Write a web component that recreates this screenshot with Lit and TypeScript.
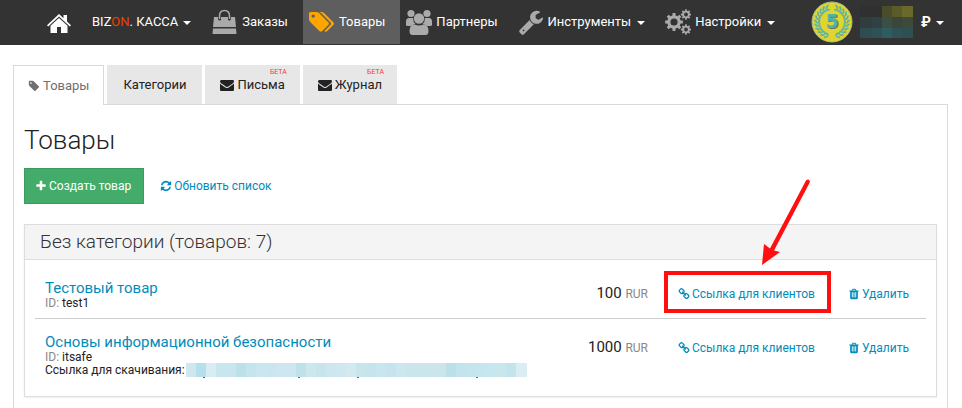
import { LitElement, html, css, svg, nothing } from "lit";
import { customElement } from "lit/decorators.js";

const P = {
  tag: "M576 448q0-53-37.500-90.500t-90.500-37.500-90.500 37.500-37.500 90.500 37.500 90.500 90.500 37.500 90.500-37.500 37.500-90.500zm1067 576q0 53-37 90l-491 492q-39 37-91 37-53 0-90-37l-715-716q-38-37-64.500-101t-26.500-117v-416q0-52 38-90t90-38h416q53 0 117 26.500t102 64.500l715 714q37 39 37 91z",
  tags: "M448 448q0-53-37.500-90.500t-90.500-37.500-90.500 37.500-37.500 90.500 37.500 90.500 90.500 37.500 90.500-37.500 37.500-90.500zm1067 576q0 53-37 90l-491 492q-39 37-91 37-53 0-90-37l-715-716q-38-37-64.500-101t-26.500-117v-416q0-52 38-90t90-38h416q53 0 117 26.500t102 64.500l715 714q37 39 37 91zm384 0q0 53-37 90l-491 492q-39 37-91 37-36 0-59-14t-53-45l470-470q37-37 37-90 0-52-37-91l-715-714q-38-38-102-64.500t-117-26.500h224q53 0 117 26.500t102 64.500l715 714q37 39 37 91z",
  envelope: "M1792 710v794q0 66-47 113t-113 47h-1472q-66 0-113-47t-47-113v-794q44 49 101 87 362 246 497 345 57 42 92.500 65.500t94.500 48 110 24.500h2q51 0 110-24.500t94.500-48 92.500-65.500q170-123 498-345 57-39 100-87zm0-294q0 79-49 151t-122 123q-376 261-468 325-10 7-42.500 30.500t-54 38-52 32.500-57.500 27-50 9h-2q-23 0-50-9t-57.500-27-52-32.500-54-38-42.500-30.500q-91-64-262-182.500t-205-142.500q-62-42-117-115.500t-55-136.500q0-78 41.500-130t118.500-52h1472q65 0 112.500 47t47.500 113z",
  plus: "M1600 736v192q0 40-28 68t-68 28h-416v416q0 40-28 68t-68 28h-192q-40 0-68-28t-28-68v-416h-416q-40 0-68-28t-28-68v-192q0-40 28-68t68-28h416v-416q0-40 28-68t68-28h192q40 0 68 28t28 68v416h416q40 0 68 28t28 68z",
  refresh: "M1639 1056q0 5-1 7-64 268-268 434.500t-478 166.500q-146 0-282.500-55t-243.500-157l-129 129q-19 19-45 19t-45-19-19-45v-448q0-26 19-45t45-19h448q26 0 45 19t19 45-19 45l-137 137q71 66 161 102t187 36q134 0 250-65t186-179q11-17 53-117 8-23 30-23h192q13 0 22.500 9.500t9.500 22.500zm25-800v448q0 26-19 45t-45 19h-448q-26 0-45-19t-19-45 19-45l138-138q-148-137-349-137-134 0-250 65t-186 179q-11 17-53 117-8 23-30 23h-199q-13 0-22.500-9.500t-9.500-22.500v-7q65-268 270-434.500t480-166.500q146 0 284 55.500t245 156.500l130-129q19-19 45-19t45 19 19 45z",
  trash: "M704 1376v-704q0-14-9-23t-23-9h-64q-14 0-23 9t-9 23v704q0 14 9 23t23 9h64q14 0 23-9t9-23zm256 0v-704q0-14-9-23t-23-9h-64q-14 0-23 9t-9 23v704q0 14 9 23t23 9h64q14 0 23-9t9-23zm256 0v-704q0-14-9-23t-23-9h-64q-14 0-23 9t-9 23v704q0 14 9 23t23 9h64q14 0 23-9t9-23zm-544-992h448l-48-117q-7-9-17-11h-317q-10 2-17 11zm928 32v64q0 14-9 23t-23 9h-96v948q0 83-47 143.500t-113 60.500h-832q-66 0-113-58.500t-47-141.500v-952h-96q-14 0-23-9t-9-23v-64q0-14 9-23t23-9h309l70-167q15-37 54-63t79-26h320q40 0 79 26t54 63l70 167h309q14 0 23 9t9 23z",
  chain: "M1520 1216q0-40-28-68l-208-208q-28-28-68-28-42 0-72 32 3 3 19 18.500t21.500 21.500 15 19 13 25.500 3.500 27.500q0 40-28 68t-68 28q-15 0-27.500-3.500t-25.500-13-19-15-21.500-21.500-18.500-19q-33 31-33 73 0 40 28 68l206 207q27 27 68 27 40 0 68-26l147-146q28-28 28-67zm-703-705q0-40-28-68l-206-207q-28-28-68-28-39 0-68 27l-147 146q-28 28-28 67 0 40 28 68l208 208q27 27 68 27 42 0 72-31-3-3-19-18.500t-21.500-21.500-15-19-13-25.500-3.500-27.500q0-40 28-68t68-28q15 0 27.500 3.500t25.500 13 19 15 21.500 21.500 18.500 19q33-31 33-73zm895 705q0 120-85 203l-147 146q-83 83-203 83-121 0-204-85l-206-207q-83-83-83-203 0-123 88-209l-88-88q-86 88-208 88-120 0-204-84l-208-208q-84-84-84-204t85-203l147-146q83-83 203-83 121 0 204 85l206 207q83 83 83 203 0 123-88 209l88 88q86-88 208-88 120 0 204 84l208 208q84 84 84 204z",
  wrench: "M448 1472q0-26-19-45t-45-19-45 19-19 45 19 45 45 19 45-19 19-45zm644-420l-682 682q-37 37-90 37-52 0-91-37l-106-108q-38-36-38-90 0-53 38-91l681-681q39 98 114.500 173.500t173.500 114.500zm634-435q0 39-23 106-47 134-164.500 217.500t-258.500 83.500q-185 0-316.500-131.500t-131.500-316.500 131.500-316.500 316.500-131.500q58 0 121.500 16.500t107.500 46.500q16 11 16 28t-16 28l-293 169v224l193 107q5-3 79-48.500t135.500-81 70.500-35.500q15 0 23.500 10t8.500 25z",
};

/** Outline of a toothed wheel with a round hole. */
function gear(cx: number, cy: number, outer: number, root: number, hole: number, teeth: number) {
  const step = (Math.PI * 2) / teeth;
  const pt = (r: number, a: number) => `${(cx + r * Math.cos(a)).toFixed(2)} ${(cy + r * Math.sin(a)).toFixed(2)}`;
  let d = "";
  for (let i = 0; i < teeth; i++) {
    const a = i * step;
    d += `${i ? "L" : "M"}${pt(root, a - step * 0.3)}L${pt(outer, a - step * 0.2)}L${pt(outer, a + step * 0.2)}L${pt(root, a + step * 0.3)}`;
  }
  return `${d}ZM${cx - hole} ${cy}a${hole} ${hole} 0 1 0 ${hole * 2} 0a${hole} ${hole} 0 1 0 ${-hole * 2} 0Z`;
}

const glyph = (d: string, cls = "glyph") =>
  html`<svg class=${cls} viewBox="0 0 1792 1792" aria-hidden="true"><path d=${d} /></svg>`;

const homeIcon = html`<svg class="home-icon" viewBox="0 0 24 20" aria-hidden="true">
  <path d="M12 0 16.500 4.200V1H20v6.500l4 3.700-1.200 1.300L12 2.600 1.200 12.500 0 11.200Z" />
  <path d="M12 4 20.500 11.800V19H14v-6h-4v6H3.500v-7.200Z" />
</svg>`;

const bagIcon = html`<svg class="nav-icon" viewBox="0 0 26 26" aria-hidden="true">
  <path d="M2 8H6V10a2 2 0 0 0 3 1V8H16v3a2 2 0 0 0 3-1V8H23L24 18H1Z" />
  <path d="M1 19.500H24L24.500 25H.5Z" />
  <path class="line" d="M7.500 10V7q0-5.500 5-5.500t5 5.500v3" />
</svg>`;

const tagsIcon = html`<svg class="nav-icon tags" viewBox="0 64 1900 1664" aria-hidden="true"><path d=${P.tags} /></svg>`;

const peopleIcon = html`<svg class="nav-icon" viewBox="0 0 26 26" aria-hidden="true">
  <circle cx="5" cy="4.500" r="3.600" /><circle cx="21" cy="4.500" r="3.600" />
  <path d="M0 16v-3.500Q0 9 3 9h4q0 4 2.500 6Q6 16 5 17H1.500Q0 17 0 16ZM26 16v-3.500Q26 9 23 9h-4q0 4-2.500 6 3.500 1 4.500 2h3.500q1.500 0 1.500-1Z" />
  <circle cx="13" cy="9.500" r="5.200" />
  <path d="M3.500 22q0-6.500 5-6.500 4.500 1.800 9 0 5 0 5 6.500 0 4-3 4h-13q-3 0-3-4Z" />
</svg>`;

const wrenchIcon = html`<svg class="nav-icon wrench" viewBox="0 0 1792 1792" aria-hidden="true"><path d=${P.wrench} /></svg>`;

const gearsIcon = html`<svg class="nav-icon" viewBox="0 0 26 26" aria-hidden="true">
  <path fill-rule="evenodd" d=${gear(9, 13, 9, 6.8, 3.6, 8)} />
  <path fill-rule="evenodd" d=${gear(21, 5.5, 5.2, 3.9, 1.9, 8)} />
  <path fill-rule="evenodd" d=${gear(21, 20.5, 5.2, 3.9, 1.9, 8)} />
</svg>`;

const leaves = Array.from({ length: 11 }, (_, i) => 112 + i * 14).flatMap((a) => [a, 180 - a]);

const medal = html`<svg class="medal" viewBox="0 0 42 42" role="img" aria-label="5">
  <circle cx="21" cy="21" r="20" class="coin" />
  ${leaves.map((a, i) => {
    const tilt = i % 2 ? -1 : 1;
    return svg`<g transform="rotate(${a} 21 21)">
      <ellipse cx="37" cy="21" rx="2.600" ry="1" transform="rotate(${tilt * 50} 37 21)" />
      <ellipse cx="34" cy="21" rx="2.200" ry="1" transform="rotate(${tilt * 115} 34 21)" />
    </g>`;
  })}
  <text x="22" y="28" class="digit-shade">5</text>
  <text x="21" y="27" class="digit">5</text>
</svg>`;

const userMosaic = [
  ["#2f3030", "#303030", "#4b4c29", "#5b5a29", "#6b6929"],
  ["#303c3e", "#2e4145", "#3b4f45", "#3a4639", "#3d4a3a"],
  ["#2f4d51", "#2d5155", "#2d5d63", "#2e5256", "#2f5052"],
];
const urlMosaic = [
  "#cfe8ee", "#b5dfea", "#d7edf3", "#c8e6ee", "#c9e5ed", "#bde1ea", "#c5e5ee", "#cce6ef", "#c9e5ed", "#cde6f0", "#cde6f0",
  "#bfe2ea", "#cce7ee", "#c8e5ec", "#cde6f0", "#cfe7f1", "#d4e9ef", "#c8e5eb", "#c6e4ec", "#c9e5ef", "#c6e4ef", "#cee7ee",
  "#cbe5ec", "#cbe5ec", "#cbe5ea", "#cbe5ea", "#bbe0ea", "#c3e4ec", "#c5e5ed", "#c5e6ee", "#c6e7ef", "#c9e6ed", "#c3e4ec", "#d9edf3",
];

const products = [
  { title: "Тестовый товар", id: "test1", price: "100", marked: true, download: false },
  { title: "Основы информационной безопасности", id: "itsafe", price: "1000", marked: false, download: true },
];

@customElement("app-root")
export class AppRoot extends LitElement {
  static styles = css`
    :host {
      display: block;
      color: #222;
      background: #fff;
      font: 13px/20px Roboto, "Liberation Sans", sans-serif;
    }
    * { box-sizing: border-box; }
    svg { display: block; flex: none; fill: currentColor; }
    a { color: #008cba; text-decoration: none; }
    h1, h2, h3, ul { margin: 0; padding: 0; }
    h1, h2 { font-weight: 300; }
    ul { list-style: none; }

    .nav { display: flex; height: 45px; padding: 0 18px 1px 47px; background: #333; }
    .nav a { display: flex; align-items: center; color: #fff; white-space: nowrap; }
    .home { margin-right: 21px; padding-top: 3px; }
    .home-icon { width: 24px; height: 20px; }
    .brand { margin-right: 21px; }
    .accent { color: #f04000; }
    .caret { margin: 2px 0 0 5px; border: 4px solid transparent; border-top-color: #fff; border-bottom: 0; }
    .nav .item { gap: 4px; }
    .nav .item .caret { margin-left: 2px; }
    .nav .caret-item { margin-right: 20px; }
    .nav .current { gap: 5px; margin-right: 6px; padding: 0 15px 0 6px; background: #5e5e5e; }
    .nav .bag { margin-right: 15px; }
    .nav-icon { width: 26px; height: 26px; color: #aaa; }
    .nav-icon .line { fill: none; stroke: currentColor; stroke-width: 1.5; }
    .nav-icon.tags { width: 25px; height: 22px; color: #ffa500; }
    .account { display: flex; align-items: center; margin-left: auto; }
    .account b { font-size: 14px; }
    .medal { width: 42px; height: 42px; margin-right: 7px; fill: #62b3a0; }
    .coin { fill: #dfd52e; stroke: #a8b98c; }
    .digit, .digit-shade { font: 700 19px "DejaVu Sans", sans-serif; text-anchor: middle; fill: #55b0a9; }
    .digit-shade { fill: #66776b; }
    .user-mosaic { width: 53px; height: 32px; margin-right: 8px; }

    .page { padding: 20px 14px 0 13px; }
    .tabs { display: flex; gap: 3px; border-bottom: 1px solid #d9d9d9; }
    .tab {
      position: relative; display: flex; align-items: center; gap: 3px;
      height: 39px; padding: 0 15px; color: #222; background: #e7e7e7;
    }
    .tab.plain { padding: 0 16px; }
    .tab.active {
      height: 40px; margin-bottom: -1px; padding: 0 14px;
      color: #6f6f6f; background: #fff; border: 1px solid #d9d9d9; border-bottom: 0;
    }
    .beta { position: absolute; top: 2px; right: 13px; font-size: 7px; line-height: 10px; color: #f33; }
    .glyph { width: 12px; height: 12px; }
    .wide { width: 14px; height: 14px; }

    .pane { padding: 18px 10px 11px; border: 1px solid #d9d9d9; border-top: 0; }
    h1 { font-size: 26px; line-height: 34px; }
    .actions { display: flex; align-items: center; gap: 16px; margin: 11px 0 20px; font-size: 12px; }
    .create {
      display: flex; align-items: center; gap: 2px; height: 36px; padding: 0 12px 0 10px;
      font: 12px/20px Roboto, "Liberation Sans", sans-serif; color: #fff; background: #43ac6a; border: 1px solid #3c9a5f;
    }
    .link { display: flex; align-items: center; gap: 2px; white-space: nowrap; }

    .group { border: 1px solid #ddd; box-shadow: 0 1px 2px #0001; }
    h2 { padding: 0 15px; font-size: 19px; line-height: 34px; color: #333; background: #f4f4f4; border-bottom: 1px solid #ddd; }
    .products { padding: 0 10px 10px; }
    .product {
      display: grid; grid-template-columns: minmax(0, 1fr) 90px 140px 78px; column-gap: 30px;
      padding: 19px 0 8px 10px; font-size: 12px; line-height: 13px;
    }
    .product + .product { padding-top: 14px; border-top: 1px solid #ccc; }
    h3 { font-size: 15px; line-height: 18px; font-weight: 400; }
    .muted { color: #888; font-size: 12px; }
    .price { text-align: right; font-size: 15px; line-height: 20px; padding-top: 4px; }
    .product .link { position: relative; height: 20px; margin-top: 5px; }
    .download { display: flex; gap: 1px; white-space: nowrap; }
    .url-mosaic { width: 341px; height: 15px; margin-top: -1px; }
    .mark { position: absolute; left: -14px; top: -13px; width: 167px; height: 42px; border: 4px solid #ff0f0f; }
    .arrow { position: absolute; left: 82px; top: -107px; width: 52px; height: 90px; fill: #ff0f0f; }
  `;

  private tab(label: string, icon: string, cls = "") {
    const beta = cls === "beta-tab";
    return html`<a class="tab ${cls}" href="#">
      ${icon ? glyph(icon, beta ? "wide" : "glyph") : nothing}<span>${label}</span>
      ${beta ? html`<span class="beta">БЕТА</span>` : nothing}
    </a>`;
  }

  private product(p: (typeof products)[number]) {
    return html`<li class="product">
      <div>
        <h3><a href="#">${p.title}</a></h3>
        <div><span class="muted">ID:</span> ${p.id}</div>
        ${p.download
          ? html`<div class="download">
              <span>Ссылка для скачивания:</span>
              <svg class="url-mosaic" viewBox="0 0 341 15" aria-hidden="true">
                ${urlMosaic.map((c, i) => svg`<rect x=${i * 10} width="11" height="14" fill=${c} />`)}
                ${[17, 112, 171, 290].map((x) => svg`<rect x=${x} y="14" width="2" height="1" fill="#008cba" />`)}
              </svg>
            </div>`
          : nothing}
      </div>
      <div class="price">${p.price} <span class="muted">RUR</span></div>
      <a class="link" href="#">
        ${glyph(P.chain)}<span>Ссылка для клиентов</span>
        ${p.marked
          ? html`<span class="mark"></span>
              <svg class="arrow" viewBox="0 0 52 90" aria-hidden="true">
                <path d="M2 88 4 67 10 71.500 46 3.500Q49 1 50 5L14 73.500 20 75Z" />
              </svg>`
          : nothing}
      </a>
      <a class="link" href="#">${glyph(P.trash)}<span>Удалить</span></a>
    </li>`;
  }

  render() {
    const caret = html`<span class="caret"></span>`;
    return html`
      <nav class="nav">
        <a class="home" href="#" aria-label="Главная">${homeIcon}</a>
        <a class="brand" href="#"><span>BIZ<span class="accent">ON</span>. КАССА</span>${caret}</a>
        <a class="item bag" href="#">${bagIcon}<span>Заказы</span></a>
        <a class="item current" href="#">${tagsIcon}<span>Товары</span></a>
        <a class="item caret-item" href="#">${peopleIcon}<span>Партнеры</span></a>
        <a class="item caret-item" href="#">${wrenchIcon}<span>Инструменты</span>${caret}</a>
        <a class="item" href="#">${gearsIcon}<span>Настройки</span>${caret}</a>
        <div class="account">
          ${medal}
          <svg class="user-mosaic" viewBox="0 0 53 32" aria-hidden="true">
            ${userMosaic.map((row, y) => row.map((c, x) => svg`<rect x=${x ? x * 10 + 2 : 0} y=${y * 11} width="12" height="11" fill=${c} />`))}
          </svg>
          <a href="#"><b>₽</b>${caret}</a>
        </div>
      </nav>
      <main class="page">
        <div class="tabs">
          ${this.tab("Товары", P.tag, "active")} ${this.tab("Категории", "", "plain")}
          ${this.tab("Письма", P.envelope, "beta-tab")} ${this.tab("Журнал", P.envelope, "beta-tab")}
        </div>
        <section class="pane">
          <h1>Товары</h1>
          <div class="actions">
            <button class="create" type="button">${glyph(P.plus)}<span>Создать товар</span></button>
            <a class="link" href="#">${glyph(P.refresh)}<span>Обновить список</span></a>
          </div>
          <div class="group">
            <h2>Без категории (товаров: 7)</h2>
            <ul class="products">
              ${products.map((p) => this.product(p))}
            </ul>
          </div>
        </section>
      </main>
    `;
  }
}
